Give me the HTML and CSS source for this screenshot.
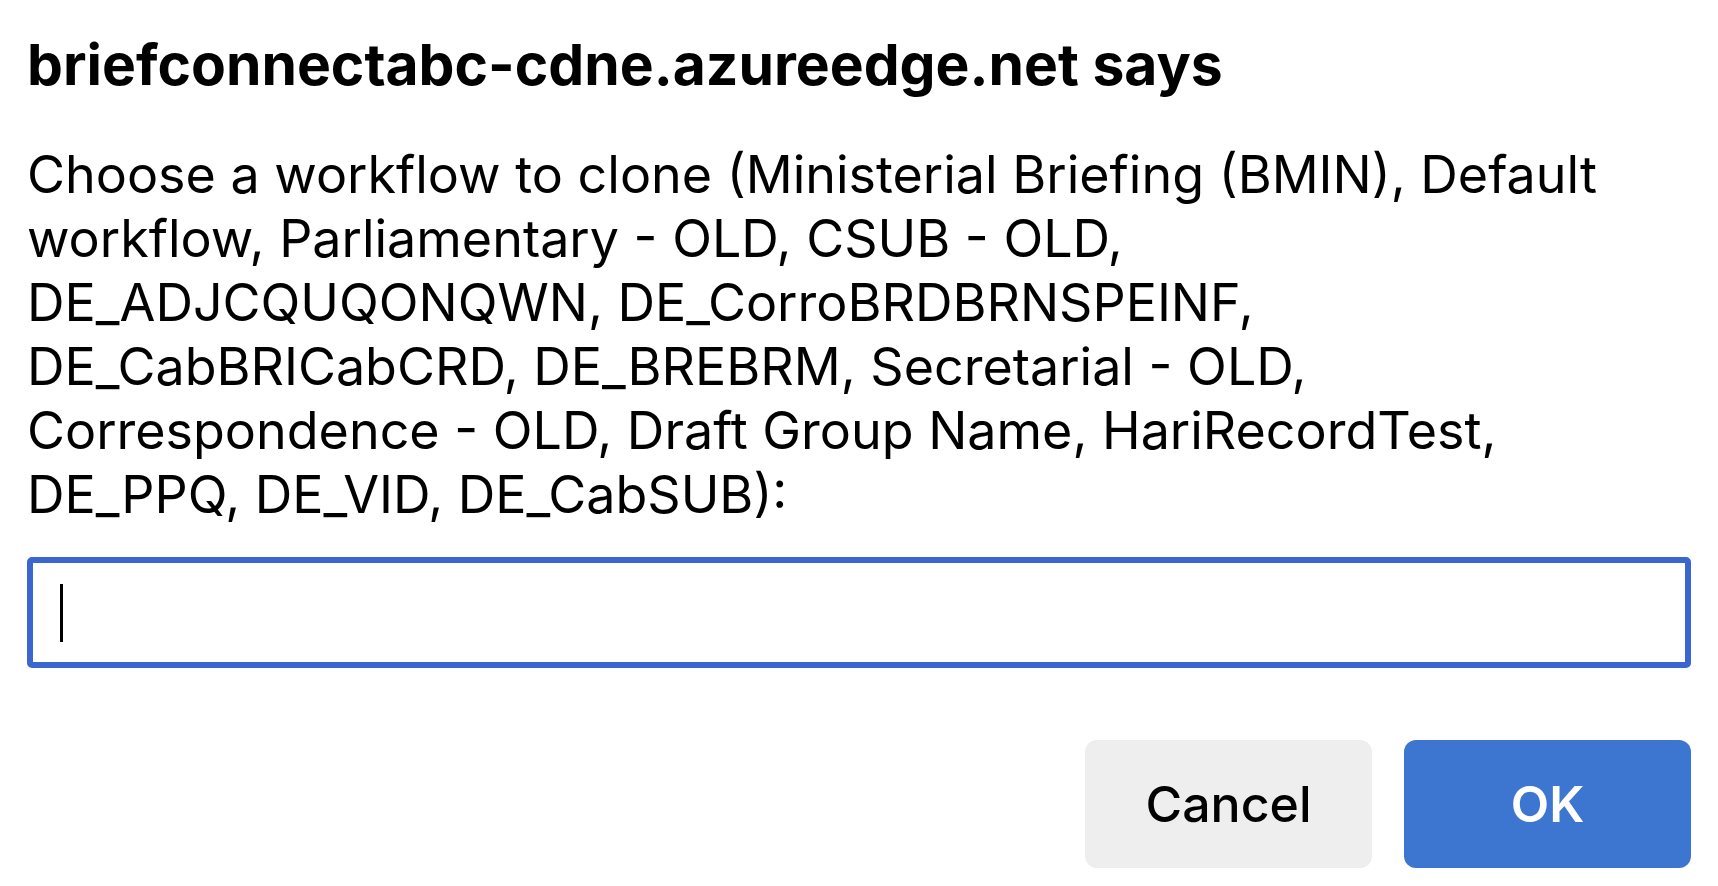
FILE: index.html
```html
<!DOCTYPE html>
<html lang="en">
<head>
    <meta charset="UTF-8">
    <meta name="viewport" content="width=device-width, initial-scale=1.0">
    <title>Prompt</title>
    <link rel="stylesheet" href="styles.css">
</head>
<body>
    <div class="dialog">
        <h1 class="dialog-title">briefconnectabc-cdne.azureedge.net says</h1>
        <p class="dialog-message">Choose a workflow to clone (Ministerial Briefing (BMIN), Default workflow, Parliamentary - OLD, CSUB - OLD, DE_ADJCQUQONQWN, DE_CorroBRDBRNSPEINF, DE_CabBRICabCRD, DE_BREBRM, Secretarial - OLD, Correspondence - OLD, Draft Group Name, HariRecordTest, DE_PPQ, DE_VID, DE_CabSUB):</p>
        <div class="prompt-field">
            <span class="caret"></span>
        </div>
        <div class="dialog-buttons">
            <button class="btn btn-cancel">Cancel</button>
            <button class="btn btn-ok">OK</button>
        </div>
    </div>
</body>
</html>
```

FILE: styles.css
```css
body {
    margin: 0;
    background-color: #ffffff;
    font-family: Inter, "Liberation Sans", Arial, sans-serif;
    color: #000000;
}
.dialog {
    display: flex;
    flex-direction: column;
    padding: 0 27px;
}
.dialog-title {
    margin: 35px 0 0;
    font-size: 57px;
    font-weight: 700;
    line-height: 60px;
}
.dialog-message {
    max-width: 1600px;
    margin: 48px 0 0;
    font-size: 52px;
    font-weight: 400;
    line-height: 64px;
}
.prompt-field {
    display: flex;
    align-items: center;
    height: 99px;
    margin-top: 30px;
    padding-left: 27px;
    border: 6px solid #3a66cf;
    border-radius: 5px;
}
.caret {
    width: 3px;
    height: 58px;
    background-color: #000000;
}
.dialog-buttons {
    display: flex;
    justify-content: flex-end;
    gap: 32px;
    margin-top: 72px;
}
.btn {
    width: 287px;
    height: 128px;
    border: none;
    border-radius: 12px;
    font-family: Inter, "Liberation Sans", Arial, sans-serif;
    font-size: 50px;
    font-weight: 500;
}
.btn-cancel {
    background-color: #eeeeee;
    color: #000000;
}
.btn-ok {
    background-color: #3c76d0;
    color: #ffffff;
    font-weight: 600;
}
```
